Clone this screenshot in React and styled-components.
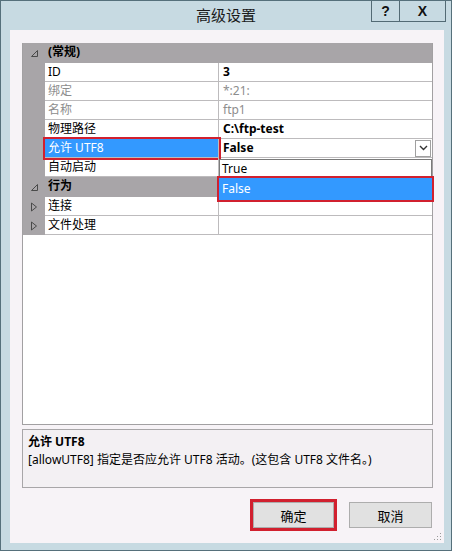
import React from "react";
import styled, { createGlobalStyle } from "styled-components";

const Global = createGlobalStyle`
  html, body { margin: 0; padding: 0; background: #ffffff; }
  body { font-family: "Noto Sans", "Noto Sans CJK SC", sans-serif; }
  * { box-sizing: border-box; }
`;

const Window = styled.div`
  width: 452px;
  height: 551px;
  background: #c7dae2;
  border: 1px solid #56707b;
  display: flex;
  flex-direction: column;
  position: relative;
`;

const TitleBar = styled.div`
  height: 29px;
  flex: none;
  display: flex;
  align-items: center;
  justify-content: center;
  font-family: "Noto Sans CJK SC", sans-serif;
  font-size: 15px;
  color: #1a1a1a;
  padding-bottom: 2px;
`;

const Caption = styled.div`
  position: absolute;
  top: 0;
  right: 5px;
  display: flex;
`;

const CapButton = styled.div`
  width: ${(p) => p.$w}px;
  height: 21px;
  border: 1px solid #536a74;
  border-top: none;
  margin-left: -1px;
  display: flex;
  align-items: center;
  justify-content: center;
  font-family: "Liberation Sans", Arial, sans-serif;
  font-weight: bold;
  font-size: 14px;
  color: #111;
`;

const Client = styled.div`
  flex: 1;
  margin: 0 7px 7px 9px;
  background: #f7f3f7;
  padding: 13px 11px 0 12px;
  display: flex;
  flex-direction: column;
`;

const Grid = styled.div`
  height: 382px;
  flex: none;
  background: #ffffff;
  border: 1px solid #a2a0a2;
  border-top: none;
  position: relative;
  display: flex;
  flex-direction: column;
`;

const Row = styled.div`
  display: grid;
  grid-template-columns: 22px 174px 1fr;
  height: ${(p) => (p.$cat ? 20 : 19)}px;
  background: ${(p) => (p.$cat ? "#a8a5a8" : "transparent")};
  font-size: 12px;
  line-height: 18px;
`;

const Gutter = styled.div`
  background: #a8a5a8;
  display: flex;
  align-items: center;
  justify-content: center;
`;

const NameCell = styled.div`
  padding-left: 3px;
  border-bottom: 1px solid ${(p) => (p.$cat ? "transparent" : "#bdbbbd")};
  border-right: ${(p) => (p.$cat ? "none" : "1px solid #bdbbbd")};
  background: ${(p) => (p.$sel ? "#3399ff" : "transparent")};
  color: ${(p) => (p.$sel ? "#ffffff" : p.$dim ? "#8d8d8d" : "#000")};
  font-weight: ${(p) => (p.$cat ? "bold" : "normal")};
  font-family: "Noto Sans", "Noto Sans CJK SC", sans-serif;
  white-space: nowrap;
  position: relative;
  ${(p) => (p.$sel ? "outline: 2px solid #d1202f; outline-offset: 0px;" : "")}
`;

const ValueCell = styled.div`
  padding-left: 4px;
  border-bottom: 1px solid ${(p) => (p.$cat ? "transparent" : "#bdbbbd")};
  color: ${(p) => (p.$dim ? "#8d8d8d" : "#000")};
  font-weight: ${(p) => (p.$bold ? "bold" : "normal")};
  display: flex;
  align-items: center;
  justify-content: space-between;
  white-space: nowrap;
`;

const DropButton = styled.div`
  width: 16px;
  height: 17px;
  margin-right: 1px;
  border: 1px solid #a0a0a0;
  background: #fff;
  display: flex;
  align-items: center;
  justify-content: center;
`;

const DropList = styled.div`
  position: absolute;
  left: 196px;
  right: 0;
  top: 116px;
  height: 43px;
  background: #fff;
  border: 1px solid #7a7a7a;
  font-size: 12px;
  display: flex;
  flex-direction: column;
`;

const DropItem = styled.div`
  height: ${(p) => (p.$sel ? 22 : 18)}px;
  line-height: ${(p) => (p.$sel ? 22 : 18)}px;
  padding-left: 2px;
  background: ${(p) => (p.$sel ? "#3399ff" : "#fff")};
  color: ${(p) => (p.$sel ? "#fff" : "#000")};
  ${(p) => (p.$sel ? "outline: 2px solid #d1202f; outline-offset: 0px; margin: 0 -1px; padding-left: 3px;" : "")}
`;

const Desc = styled.div`
  margin-top: 4px;
  height: 59px;
  flex: none;
  border: 1px solid #a8a6a8;
  background: #f3f0f3;
  padding: 3px 5px;
  font-size: 12px;
  line-height: 18px;
  color: #000;
`;

const DescTitle = styled.div`
  font-weight: bold;
`;

const Buttons = styled.div`
  margin-top: 14px;
  display: flex;
  justify-content: flex-end;
  gap: 15px;
  padding-right: 1px;
`;

const Button = styled.div`
  width: ${(p) => (p.$focus ? 81 : 83)}px;
  height: 26px;
  background: #e1e1e1;
  border: 1px solid #adadad;
  display: flex;
  align-items: center;
  justify-content: center;
  font-family: "Noto Sans CJK SC", sans-serif;
  font-size: 13px;
  color: #000;
  ${(p) => (p.$focus ? "outline: 3px solid #d1202f; outline-offset: 0px;" : "")}
`;

const Grip = styled.svg`
  position: absolute;
  right: 9px;
  bottom: 9px;
`;

const Expanded = () => (
  <svg width="9" height="9" viewBox="0 0 9 9">
    <path d="M7.5 1.5 L7.5 7.5 L1.5 7.5 Z" fill="none" stroke="#4a4a4a" strokeWidth="1" />
  </svg>
);

const Collapsed = () => (
  <svg width="8" height="10" viewBox="0 0 8 10">
    <path d="M1.5 1 L6.5 5 L1.5 9 Z" fill="none" stroke="#4a4a4a" strokeWidth="1" />
  </svg>
);

const Chevron = () => (
  <svg width="9" height="6" viewBox="0 0 9 6">
    <path d="M1 1 L4.5 4.5 L8 1" fill="none" stroke="#333" strokeWidth="1.4" />
  </svg>
);

const rows = [
  { name: "ID", value: "3", bold: true },
  { name: "绑定", value: "*:21:", dim: true },
  { name: "名称", value: "ftp1", dim: true },
  { name: "物理路径", value: "C:\\ftp-test", bold: true },
  { name: "允许 UTF8", value: "False", bold: true, sel: true, drop: true },
  { name: "自动启动", value: "" },
];

export default function App() {
  return (
    <>
      <Global />
      <Window>
        <TitleBar>高级设置</TitleBar>
        <Caption>
          <CapButton $w={29}>?</CapButton>
          <CapButton $w={47}>X</CapButton>
        </Caption>
        <Client>
          <Grid>
            <Row $cat>
              <Gutter><Expanded /></Gutter>
              <NameCell $cat>(常规)</NameCell>
              <ValueCell $cat />
            </Row>
            {rows.map((r) => (
              <Row key={r.name}>
                <Gutter />
                <NameCell $dim={r.dim} $sel={r.sel}>{r.name}</NameCell>
                <ValueCell $dim={r.dim} $bold={r.bold}>
                  <span>{r.value}</span>
                  {r.drop && (
                    <DropButton><Chevron /></DropButton>
                  )}
                </ValueCell>
              </Row>
            ))}
            <Row $cat>
              <Gutter><Expanded /></Gutter>
              <NameCell $cat>行为</NameCell>
              <ValueCell $cat />
            </Row>
            <Row>
              <Gutter><Collapsed /></Gutter>
              <NameCell>连接</NameCell>
              <ValueCell />
            </Row>
            <Row>
              <Gutter><Collapsed /></Gutter>
              <NameCell>文件处理</NameCell>
              <ValueCell />
            </Row>
            <DropList>
              <DropItem>True</DropItem>
              <DropItem $sel>False</DropItem>
            </DropList>
          </Grid>
          <Desc>
            <DescTitle>允许 UTF8</DescTitle>
            <div>[allowUTF8] 指定是否应允许 UTF8 活动。(这包含 UTF8 文件名。)</div>
          </Desc>
          <Buttons>
            <Button $focus>确定</Button>
            <Button>取消</Button>
          </Buttons>
        </Client>
        <Grip width="8" height="8" viewBox="0 0 8 8">
          <rect x="6" y="0" width="1" height="1" fill="#9a9a9a" />
          <rect x="3" y="3" width="1" height="1" fill="#9a9a9a" />
          <rect x="6" y="3" width="1" height="1" fill="#9a9a9a" />
          <rect x="0" y="6" width="1" height="1" fill="#9a9a9a" />
          <rect x="3" y="6" width="1" height="1" fill="#9a9a9a" />
          <rect x="6" y="6" width="1" height="1" fill="#9a9a9a" />
        </Grip>
      </Window>
    </>
  );
}
